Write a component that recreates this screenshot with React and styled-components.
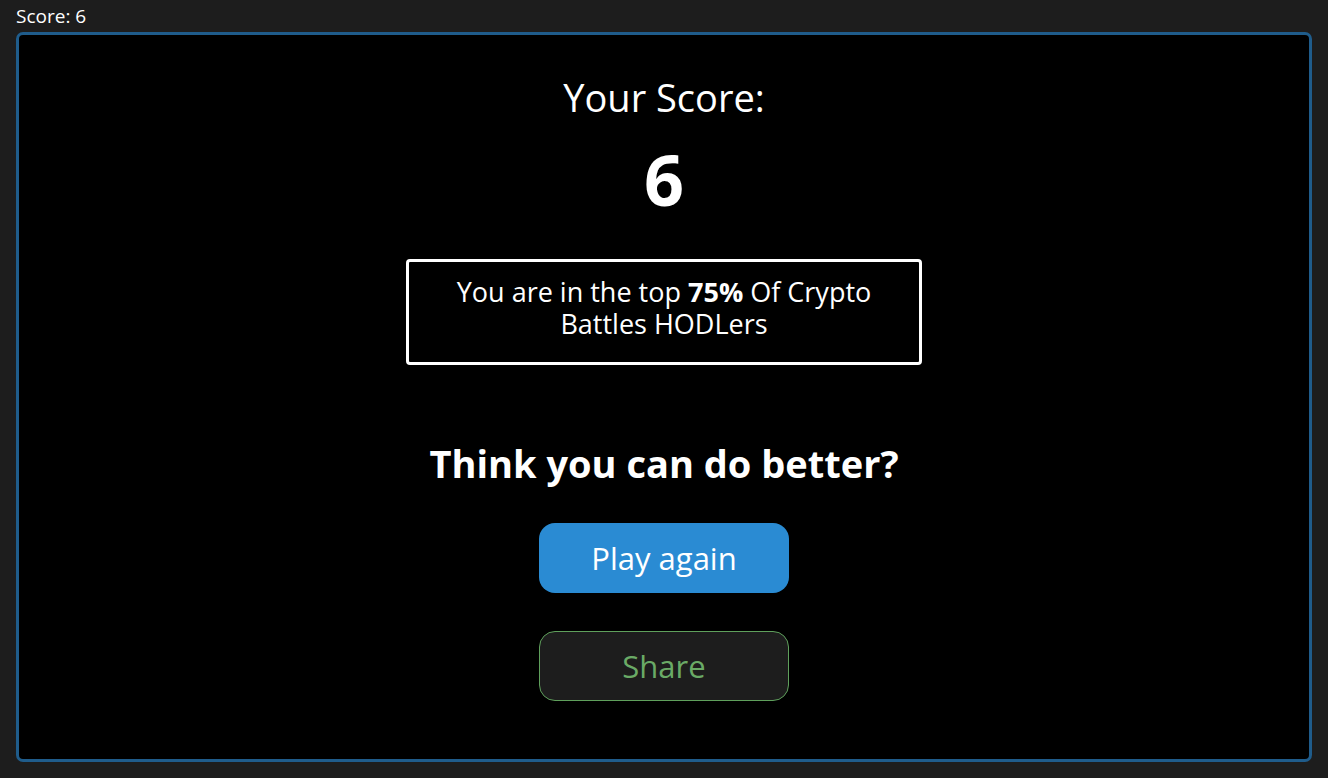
import React from "react";
import styled, { createGlobalStyle } from "styled-components";

const GlobalStyle = createGlobalStyle`
  html, body {
    margin: 0;
    padding: 0;
    background: #1d1d1d;
    font-family: "Open Sans", "Noto Sans", sans-serif;
    color: #ffffff;
  }
  * { box-sizing: border-box; }
`;

const Page = styled.div`
  display: flex;
  flex-direction: column;
  height: 100vh;
  padding: 0 16px 16px 16px;
`;

const ScoreLine = styled.div`
  height: 32px;
  padding-top: 5px;
  font-size: 19px;
  line-height: 22px;
  color: #ffffff;
`;

const Panel = styled.main`
  flex: 1;
  background: #000000;
  border: 3px solid #1f5c8b;
  border-radius: 7px;
  display: flex;
  flex-direction: column;
  align-items: center;
  padding-top: 40px;
`;

const Heading = styled.div`
  font-size: 38px;
  line-height: 44px;
  font-weight: 400;
`;

const BigScore = styled.div`
  font-size: 70px;
  line-height: 86px;
  font-weight: 700;
  margin-top: 17px;
`;

const RankBox = styled.div`
  width: 516px;
  margin-top: 37px;
  border: 3px solid #ffffff;
  border-radius: 4px;
  padding: 14px 20px 22px;
  text-align: center;
  font-size: 27px;
  line-height: 32px;

  strong { font-weight: 700; }
`;

const Challenge = styled.h2`
  margin: 76px 0 0;
  font-size: 38px;
  line-height: 44px;
  font-weight: 700;
`;

const ActionButton = styled.button`
  width: 250px;
  height: 70px;
  border-radius: 16px;
  font-family: inherit;
  font-size: 31px;
  cursor: pointer;
  margin-top: ${(p) => p.$gap}px;
  background: ${(p) => (p.$variant === "primary" ? "#2a8bd3" : "#1d1d1d")};
  color: ${(p) => (p.$variant === "primary" ? "#ffffff" : "#6aaa66")};
  border: ${(p) => (p.$variant === "primary" ? "none" : "1px solid #5fa05c")};
`;

export default function App() {
  const score = 6;
  return (
    <>
      <GlobalStyle />
      <Page>
        <ScoreLine>Score: {score}</ScoreLine>
        <Panel>
          <Heading>Your Score:</Heading>
          <BigScore>{score}</BigScore>
          <RankBox>
            You are in the top <strong>75%</strong> Of Crypto Battles HODLers
          </RankBox>
          <Challenge>Think you can do better?</Challenge>
          <ActionButton $variant="primary" $gap={38}>Play again</ActionButton>
          <ActionButton $variant="secondary" $gap={38}>Share</ActionButton>
        </Panel>
      </Page>
    </>
  );
}
